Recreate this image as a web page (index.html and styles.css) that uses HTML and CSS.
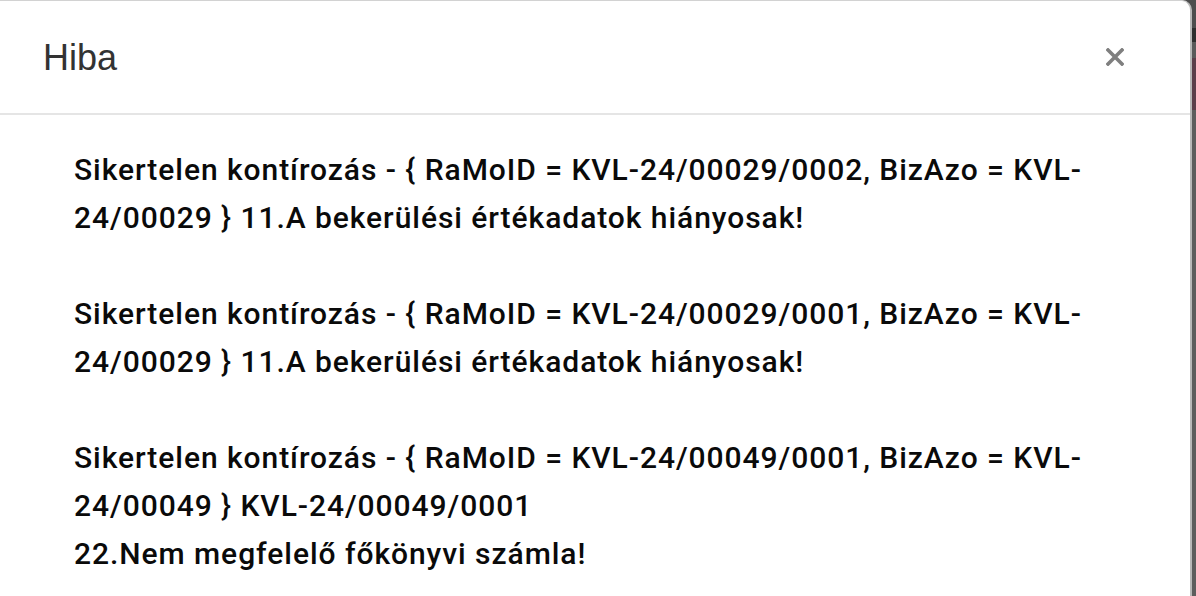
FILE: index.html
```html
<!DOCTYPE html>
<html lang="hu">
<head>
<meta charset="utf-8">
<title>Hiba</title>
<link rel="stylesheet" href="styles.css">
</head>
<body>
<div class="modal">
  <div class="modal-header">
    <h4 class="modal-title">Hiba</h4>
    <button class="close" type="button" aria-label="Bezárás">
      <svg width="18" height="18" viewBox="0 0 18 18"><path d="M2 2 L16 16 M16 2 L2 16" stroke="currentColor" stroke-width="3.6" stroke-linecap="square"/></svg>
    </button>
  </div>
  <div class="modal-body">
    <p class="msg">Sikertelen kontírozás - { RaMoID = KVL-24/00029/0002, BizAzo = KVL-<wbr>24/00029 } 11.A bekerülési értékadatok hiányosak!</p>
    <p class="msg">Sikertelen kontírozás - { RaMoID = KVL-24/00029/0001, BizAzo = KVL-<wbr>24/00029 } 11.A bekerülési értékadatok hiányosak!</p>
    <p class="msg">Sikertelen kontírozás - { RaMoID = KVL-24/00049/0001, BizAzo = KVL-<wbr>24/00049 } KVL-24/00049/0001<br>22.Nem megfelelő főkönyvi számla!</p>
  </div>
</div>
</body>
</html>
```
FILE: styles.css
```css
html, body {
  margin: 0;
  padding: 0;
  height: 100%;
  overflow: hidden;
}
body {
  background: linear-gradient(to bottom, #4d4d4d 0, #4d4d4d 28px, #2e2e2e 28px, #2e2e2e 42px, #5a5a5a 42px, #5a5a5a 58px, #5b3f4a 58px, #5b3f4a 110px, #5d5d5d 110px);
}
.modal {
  width: 1192px;
  min-height: 100%;
  box-sizing: border-box;
  background: #fff;
  border-top: 1px solid #d2d2d2;
  border-right: 2px solid #b8b8b8;
  border-top-right-radius: 10px;
}
.modal-header {
  height: 114px;
  box-sizing: border-box;
  border-bottom: 2px solid #e5e5e5;
  display: flex;
  align-items: flex-start;
  justify-content: space-between;
  padding: 31px 66px 0 43px;
}
.modal-title {
  margin: 0;
  font-family: "Liberation Sans", Arial, sans-serif;
  font-size: 36px;
  font-weight: normal;
  line-height: 51px;
  color: #333;
}
.close {
  margin-top: 16px;
  padding: 0;
  border: 0;
  background: none;
  color: #7f7f7f;
  width: 18px;
  height: 18px;
  display: flex;
}
.modal-body {
  padding: 31px 80px 0 74px;
}
.msg {
  margin: 0 0 48px;
  font-family: Roboto, "Noto Sans", sans-serif;
  font-weight: 500;
  font-size: 30px;
  letter-spacing: 0.95px;
  line-height: 48px;
  color: #0a0a0a;
}
```
